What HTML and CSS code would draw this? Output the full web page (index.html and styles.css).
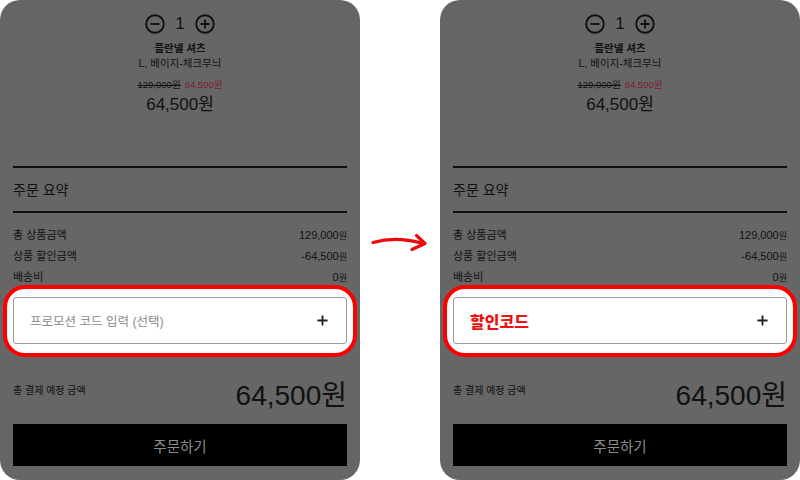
FILE: index.html
```html
<!DOCTYPE html>
<html lang="ko">
<head>
<meta charset="utf-8">
<link rel="stylesheet" href="styles.css">
</head>
<body>
<div class="stage">
  <section class="panel">
    <div class="qty">
      <svg class="circ" viewBox="0 0 20 20"><circle cx="10" cy="10" r="8.8" /><path d="M5.5 10h9" /></svg>
      <span class="qty-num">1</span>
      <svg class="circ" viewBox="0 0 20 20"><circle cx="10" cy="10" r="8.8" /><path d="M5.5 10h9M10 5.5v9" /></svg>
    </div>
    <div class="name">플란넬 셔츠</div>
    <div class="option">L, 베이지-체크무늬</div>
    <div class="prices"><span class="old">129,000원</span><span class="sale">64,500원</span></div>
    <div class="price">64,500원</div>
    <div class="rule rule-top"></div>
    <h2 class="summary-title">주문 요약</h2>
    <div class="rule"></div>
    <div class="rows">
      <div class="row"><span>총 상품금액</span><span class="val">129,000<small>원</small></span></div>
      <div class="row"><span>상품 할인금액</span><span class="val">-64,500<small>원</small></span></div>
      <div class="row"><span>배송비</span><span class="val">0<small>원</small></span></div>
    </div>
    <div class="ring">
      <div class="promo">
        <span class="placeholder">프로모션 코드 입력 (선택)</span>
        <svg class="plus" viewBox="0 0 12 12"><path d="M6 0.5v11M0.5 6h11" /></svg>
      </div>
    </div>
    <div class="total">
      <span class="total-label">총 결제 예정 금액</span>
      <span class="total-val">64,500원</span>
    </div>
    <button class="order">주문하기</button>
  </section>

  <div class="gap">
    <svg class="arrow" viewBox="0 0 80 25">
      <path d="M13 12.5 Q 36 6 61 13" />
      <path d="M56.5 5.5 L65 13.5 L52 19.5" />
    </svg>
  </div>

  <section class="panel">
    <div class="qty">
      <svg class="circ" viewBox="0 0 20 20"><circle cx="10" cy="10" r="8.8" /><path d="M5.5 10h9" /></svg>
      <span class="qty-num">1</span>
      <svg class="circ" viewBox="0 0 20 20"><circle cx="10" cy="10" r="8.8" /><path d="M5.5 10h9M10 5.5v9" /></svg>
    </div>
    <div class="name">플란넬 셔츠</div>
    <div class="option">L, 베이지-체크무늬</div>
    <div class="prices"><span class="old">129,000원</span><span class="sale">64,500원</span></div>
    <div class="price">64,500원</div>
    <div class="rule rule-top"></div>
    <h2 class="summary-title">주문 요약</h2>
    <div class="rule"></div>
    <div class="rows">
      <div class="row"><span>총 상품금액</span><span class="val">129,000<small>원</small></span></div>
      <div class="row"><span>상품 할인금액</span><span class="val">-64,500<small>원</small></span></div>
      <div class="row"><span>배송비</span><span class="val">0<small>원</small></span></div>
    </div>
    <div class="ring">
      <div class="promo">
        <span class="code">할인코드</span>
        <svg class="plus" viewBox="0 0 12 12"><path d="M6 0.5v11M0.5 6h11" /></svg>
      </div>
    </div>
    <div class="total">
      <span class="total-label">총 결제 예정 금액</span>
      <span class="total-val">64,500원</span>
    </div>
    <button class="order">주문하기</button>
  </section>
</div>
</body>
</html>
```

FILE: styles.css
```css
* { box-sizing: border-box; }
html, body { margin: 0; padding: 0; background: #ffffff; }
body {
  font-family: "Liberation Sans", "Noto Sans CJK KR", sans-serif;
  color: #111;
}
.stage {
  width: 800px;
  height: 480px;
  display: flex;
  justify-content: space-between;
}
.panel {
  width: 360px;
  height: 480px;
  background: #666666;
  border-radius: 20px;
  padding: 0 13px;
  display: flex;
  flex-direction: column;
  flex: none;
}
.panel > * { flex: none; }
.qty {
  margin-top: 14px;
  height: 20px;
  display: flex;
  justify-content: center;
  align-items: center;
  gap: 10px;
}
.circ {
  width: 20px;
  height: 20px;
  fill: none;
  stroke: #111;
  stroke-width: 1.9;
}
.qty-num {
  font-size: 17px;
  line-height: 20px;
  height: 20px;
  width: 10px;
  text-align: center;
}
.name {
  margin-top: 6px;
  text-align: center;
  font-size: 10.5px;
  font-weight: bold;
  line-height: 16px;
  height: 16px;
}
.option {
  text-align: center;
  font-size: 10.5px;
  line-height: 14px;
  height: 14px;
}
.prices {
  margin-top: 8px;
  font-size: 9.5px;
  line-height: 14px;
  height: 14px;
  display: flex;
  justify-content: center;
  gap: 4px;
}
.old { text-decoration: line-through; }
.sale { color: #7e1a2a; }
.price {
  margin-top: 2px;
  text-align: center;
  font-size: 17px;
  line-height: 22px;
  height: 22px;
}
.rule {
  height: 2px;
  background: #111;
}
.rule-top { margin-top: 50px; }
.summary-title {
  margin: 12px 0 11px;
  font-size: 14px;
  font-weight: normal;
  line-height: 20px;
  height: 20px;
}
.rows { margin-top: 12px; }
.row {
  display: flex;
  justify-content: space-between;
  align-items: center;
  font-size: 11px;
  line-height: 21px;
  height: 21px;
}
.val { font-size: 11px; }
.val small { font-size: 9px; }
.ring {
  margin: -3px -10px 0;
  height: 72px;
  border: 4px solid #ff0000;
  border-radius: 22px;
  background: #ffffff;
  padding: 8px 6px 0;
}
.promo {
  height: 47px;
  border: 1px solid #9a9a9a;
  border-radius: 3px;
  background: #fff;
  display: flex;
  align-items: center;
  justify-content: space-between;
  padding: 0 18px 0 16px;
}
.placeholder {
  font-size: 12.5px;
  color: #8a8a8a;
}
.code {
  font-size: 16px;
  font-weight: 900;
  color: #ee1111;
}
.plus {
  width: 11px;
  height: 11px;
  fill: none;
  stroke: #222;
  stroke-width: 2;
}
.total {
  margin-top: 24px;
  height: 30px;
  display: flex;
  justify-content: space-between;
  align-items: flex-start;
}
.total-label {
  margin-top: 3px;
  font-size: 10px;
  line-height: 14px;
  height: 14px;
}
.total-val {
  font-size: 28px;
  line-height: 30px;
  height: 30px;
}
.order {
  margin-top: 13px;
  height: 42px;
  border: none;
  background: #000;
  color: #8c8c8c;
  font-family: "Liberation Sans", "Noto Sans CJK KR", sans-serif;
  font-size: 14.5px;
  padding: 0;
}
.gap {
  width: 80px;
  display: flex;
  align-items: flex-start;
}
.arrow {
  margin-top: 230px;
  width: 80px;
  height: 25px;
  fill: none;
  stroke: #ee0a0a;
  stroke-width: 3.2;
  stroke-linecap: round;
  stroke-linejoin: round;
}
```
